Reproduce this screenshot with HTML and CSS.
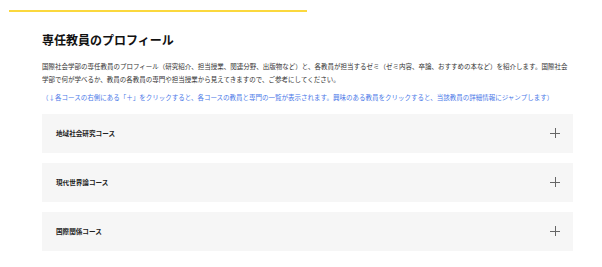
FILE: index.html
```html
<!DOCTYPE html>
<html lang="ja">
<head>
  <meta charset="UTF-8" />
  <title>専任教員のプロフィール</title>
  <link rel="stylesheet" href="styles.css">
</head>
<body>

  <div class="accent"></div>

  <div class="profile">
    <h1>専任教員のプロフィール</h1>

    <p class="lead">国際社会学部の専任教員のプロフィール（研究紹介、担当授業、関連分野、出版物など）と、各教員が担当するゼミ（ゼミ内容、卒論、おすすめの本など）を紹介します。国際社会学部で何が学べるか、教員の各教員の専門や担当授業から見えてきますので、ご参考にしてください。</p>

    <p class="note">（↓各コースの右側にある「＋」をクリックすると、各コースの教員と専門の一覧が表示されます。興味のある教員をクリックすると、当該教員の詳細情報にジャンプします）</p>

    <div class="courses">
      <div class="course">
        <span class="course-name">地域社会研究コース</span>
        <span class="plus"></span>
      </div>
      <div class="course">
        <span class="course-name">現代世界論コース</span>
        <span class="plus"></span>
      </div>
      <div class="course">
        <span class="course-name">国際関係コース</span>
        <span class="plus"></span>
      </div>
    </div>
  </div>

</body>
</html>
```

FILE: styles.css
```css
body {
  margin: 0;
  font-family: "Noto Sans CJK JP", "Noto Sans", sans-serif;
  color: #333;
  background: #fff;
}
.accent {
  margin: 10px 0 0 9px;
  width: 298px;
  height: 2px;
  background-color: #fbd83e;
}
.profile {
  padding: 0 29px 0 42px;
}
h1 {
  margin: 20px 0 0;
  font-size: 12px;
  line-height: 16px;
  font-weight: bold;
  color: #111;
}
.lead {
  margin: 12px 0 0;
  font-size: 6.5px;
  line-height: 12.5px;
}
.note {
  margin: 6px 0 0;
  font-size: 6.5px;
  line-height: 12.5px;
  color: #4a78e8;
}
.courses {
  margin-top: 10px;
  display: flex;
  flex-direction: column;
  gap: 10px;
}
.course {
  height: 39px;
  padding: 0 13px 0 14px;
  background-color: #f6f6f6;
  display: flex;
  align-items: center;
  justify-content: space-between;
}
.course-name {
  font-size: 6.6px;
  font-weight: bold;
  color: #222;
}
.plus {
  position: relative;
  width: 10px;
  height: 10px;
}
.plus::before,
.plus::after {
  content: "";
  position: absolute;
  background-color: #666;
}
.plus::before {
  left: 0;
  top: 4.5px;
  width: 10px;
  height: 1px;
}
.plus::after {
  left: 4.5px;
  top: 0;
  width: 1px;
  height: 10px;
}
```
